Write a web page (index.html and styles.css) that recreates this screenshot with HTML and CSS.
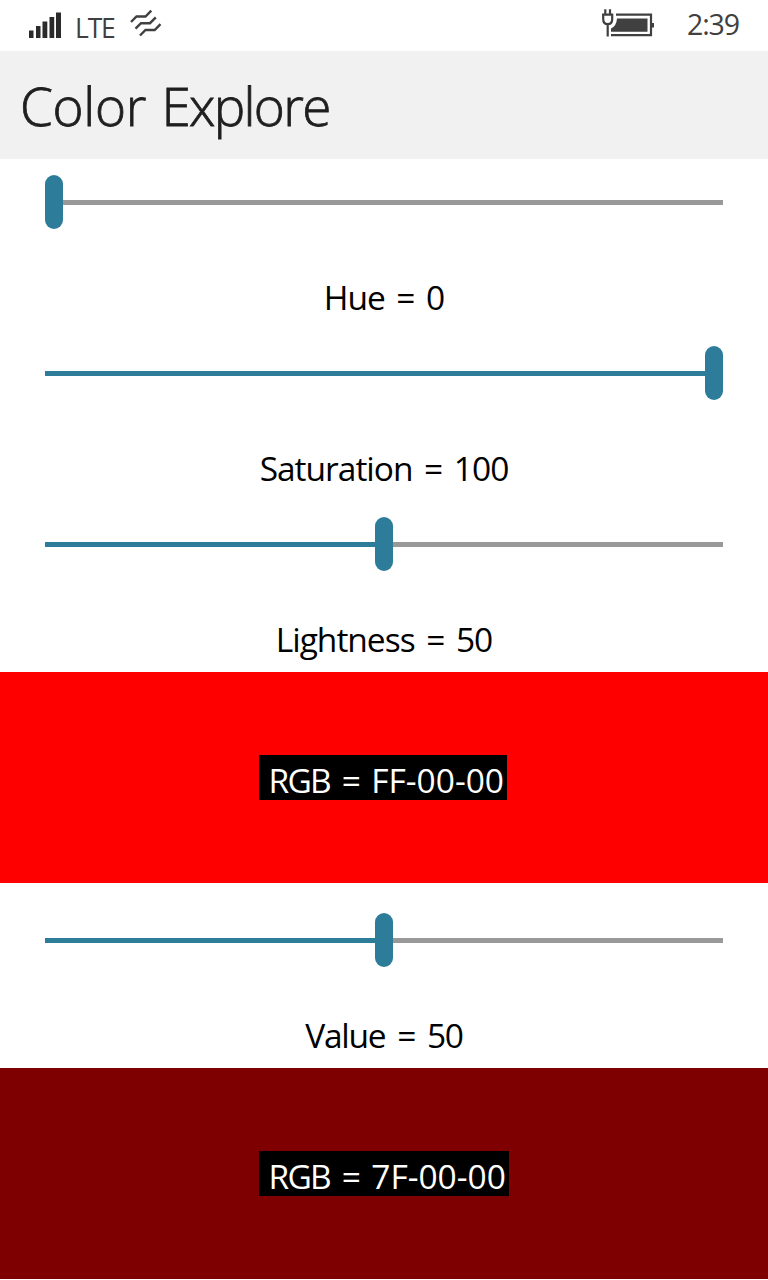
FILE: index.html
```html
<!DOCTYPE html>
<html lang="en">
<head>
<meta charset="utf-8">
<title>Color Explore</title>
<link rel="stylesheet" href="styles.css">
</head>
<body>
<header class="status">
  <svg class="signal" width="33" height="27" viewBox="0 0 33 27"><path d="M0 18.500h4.500V26H0zM7 14h4.500v12H7zM13.500 9.500H18.300V26h-4.800zM20.500 5h4.700v21h-4.700zM27 0.500h5V26h-5z" fill="#2b2b2b"/></svg>
  <span class="carrier">LTE</span>
  <svg class="waves" width="34" height="30" viewBox="0 0 34 30" fill="none" stroke="#404040" stroke-width="2.400"><path d="M1 13L6.500 7.500H15.500L21.300 1.700M5.500 19.700L11 14.200H20L25.800 8.400M10 26.500L15.500 21H24.700L30.500 15.200"/></svg>
  <svg class="battery" width="54" height="30" viewBox="0 0 54 30"><path d="M16 5.700H51V26.200H11" fill="none" stroke="#404040" stroke-width="2.200"/><path d="M51 14h3v4.500h-3z" fill="#404040"/><path d="M17 9.500H47.500V22.700H11V19.500Q16.500 17 17 9.500z" fill="#404040"/><path d="M5.300 0.300V6M10 0.300V6M2 5.700H13.300M3.200 6V10Q3.200 15.200 7.700 15.200T12.200 10V6M7.700 15V27.500" fill="none" stroke="#404040" stroke-width="2.200"/></svg>
  <time class="clock">2:39</time>
</header>
<h1 class="title"><span class="title-first">Color</span> <span class="title-second">Explore</span></h1>
<main>
  <section class="control">
    <div class="slider"><div class="thumb"></div><div class="rest"></div></div>
    <p class="label"><span>Hue = 0</span></p>
  </section>
  <section class="control">
    <div class="slider"><div class="filled"></div><div class="thumb"></div></div>
    <p class="label"><span>Saturation = 100</span></p>
  </section>
  <section class="control">
    <div class="slider"><div class="filled"></div><div class="thumb"></div><div class="rest"></div></div>
    <p class="label"><span>Lightness = 50</span></p>
  </section>
  <section class="swatch red"><div class="code code-red"><span class="code-name">RGB =</span> FF-00-00</div></section>
  <section class="control value-control">
    <div class="slider"><div class="filled"></div><div class="thumb"></div><div class="rest"></div></div>
    <p class="label"><span class="value">Value = 50</span></p>
  </section>
  <section class="swatch maroon"><div class="code code-maroon"><span class="code-name">RGB =</span> 7F-00-00</div></section>
</main>
</body>
</html>
```
FILE: styles.css
```css
* { box-sizing: border-box; }
body { margin: 0; background: #fff; color: #000; font-family: "Open Sans", "Noto Sans", sans-serif; }
svg { display: block; flex: none; }
.status { display: flex; align-items: flex-start; height: 51px; padding: 0 28px 0 29px; color: #404040; white-space: nowrap; }
.signal { margin-top: 12px; }
.carrier { margin: 9px 0 0 13px; width: 41px; font-size: 26.500px; line-height: 38px; letter-spacing: -1.200px; }
.waves { margin: 9px 0 0 14px; }
.battery { margin: 9px 0 0 auto; }
.clock { width: 53px; margin: 4px 0 0 33px; font-size: 28.500px; line-height: 40px; letter-spacing: -1.100px; }
.title { height: 108px; margin: 0; padding: 19px 0 0 20px; background: #f1f1f1; color: #1f1f1f; font-size: 53px; line-height: 72px; font-weight: 300; white-space: nowrap; -webkit-text-stroke: 0.800px #1f1f1f; }
.title-first { letter-spacing: -0.300px; }
.title-second { margin-left: 1.500px; letter-spacing: -1.700px; }
.control { height: 171px; padding: 16px 45px 0; }
.value-control { height: 185px; padding-top: 30px; }
.slider { display: flex; align-items: center; height: 54px; }
.thumb { flex: none; width: 18px; height: 54px; border-radius: 9px; background: #2d7d9a; }
.filled, .rest { flex: 1; height: 5px; }
.filled { background: #2d7d9a; }
.rest { background: #999; }
.label { margin: 45px 0 0; text-align: center; font-size: 33.500px; line-height: 46px; white-space: nowrap; letter-spacing: -1px; word-spacing: 3.900px; }
.value { letter-spacing: -1.300px; word-spacing: 4.500px; }
.swatch { display: flex; justify-content: center; align-items: center; height: 211px; }
.red { background: #f00; }
.maroon { background: #7f0000; }
.code { height: 45px; padding-left: 9.500px; background: #000; color: #fff; font-size: 33.500px; line-height: 50px; white-space: nowrap; word-spacing: 3.500px; }
.code-name { letter-spacing: -1.800px; word-spacing: 5px; }
.code-red { width: 248px; margin-right: 2px; }
.code-maroon { width: 250px; }
```
